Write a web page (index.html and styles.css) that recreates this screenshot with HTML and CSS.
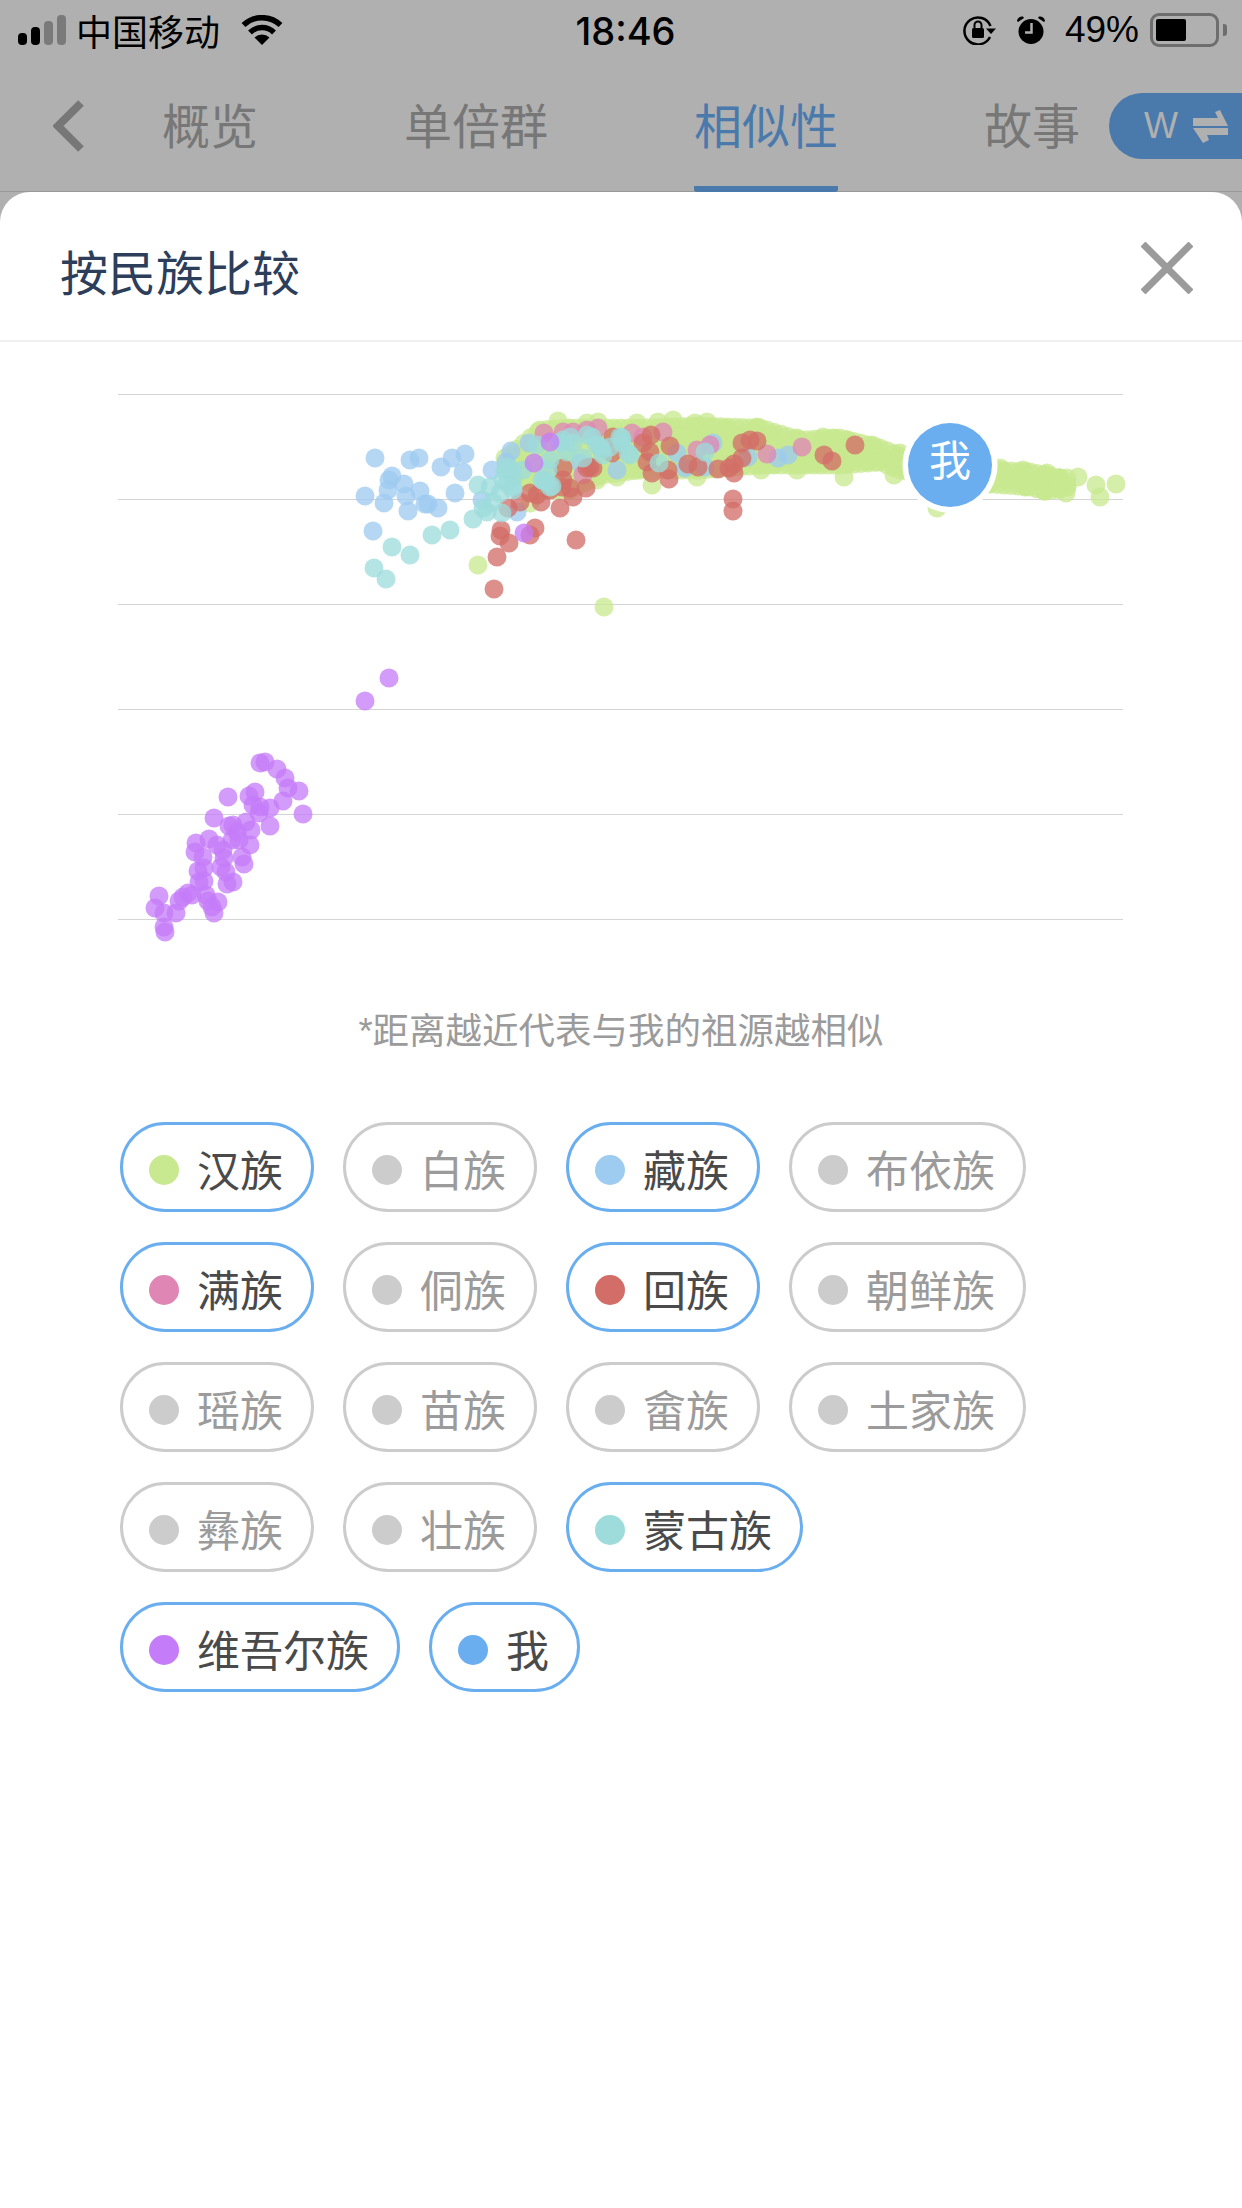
FILE: index.html
```html
<!DOCTYPE html>
<html lang="zh-CN">
<head>
    <meta charset="UTF-8">
    <meta name="viewport" content="width=device-width, initial-scale=1.0">
    <title>按民族比较</title>
    <link rel="stylesheet" href="styles.css">
</head>
<body>
    <div class="top">
        <div class="status">
            <div class="status-left">
                <div class="signal"><span class="bar1"></span><span class="bar2"></span><span class="bar3 off"></span><span class="bar4 off"></span></div>
                <span class="carrier">中国移动</span>
                <svg class="wifi" width="42" height="30" viewBox="0 0 42 30">
                    <path d="M2.5 10 A27 27 0 0 1 39.5 10" fill="none" stroke="#000" stroke-width="5.5"/>
                    <path d="M9 17.5 A17 17 0 0 1 33 17.5" fill="none" stroke="#000" stroke-width="5.5"/>
                    <path d="M21 30 L13.5 22.5 A11 11 0 0 1 28.5 22.5 Z"/>
                </svg>
            </div>
            <div class="time">18:46</div>
            <div class="status-right">
                <svg class="lock" width="33" height="30" viewBox="0 0 33 30">
                    <path d="M27 22 A13.5 13.5 0 1 1 27.5 11" fill="none" stroke="#000" stroke-width="2.5"/>
                    <path d="M23 13.5 L33 13.5 L28 19 Z"/>
                    <rect x="9" y="13" width="12" height="10" rx="1.5"/>
                    <path d="M11.5 13 V10 A3.5 3.5 0 0 1 18.5 10 V13" fill="none" stroke="#000" stroke-width="2"/>
                </svg>
                <svg class="alarm" width="30" height="30" viewBox="0 0 30 30">
                    <circle cx="15" cy="16.5" r="12.5"/>
                    <path d="M1 6 A5 5 0 0 1 7 1.5 L8 3 L2 7 Z M29 6 A5 5 0 0 0 23 1.5 L22 3 L28 7 Z"/>
                    <path d="M15.5 8 V17.5 H9" fill="none" stroke="#b0b0b0" stroke-width="2.5"/>
                </svg>
                <span class="percent">49%</span>
                <div class="battery"><div class="battery-level"></div></div>
                <div class="battery-nub"></div>
            </div>
        </div>
        <div class="nav">
            <svg class="back" width="31" height="52" viewBox="0 0 31 52">
                <path d="M28 3 L5 26 L28 49" fill="none" stroke="#777" stroke-width="8"/>
            </svg>
            <div class="tabs">
                <div class="tab">概览</div>
                <div class="tab">单倍群</div>
                <div class="tab active">相似性</div>
                <div class="tab">故事</div>
            </div>
            <div class="switch">
                <span>W</span>
                <svg width="35" height="33" viewBox="0 0 35 33">
                    <path d="M0 8 H25 L22 2 L27 0 L35 16 H0 Z M35 18 V25 H14 L16 30 L10 33 L0 18 Z" fill="#b0b0b0"/>
                </svg>
            </div>
        </div>
    </div>

    <div class="sheet">
        <div class="sheet-head">
            <div class="sheet-title">按民族比较</div>
            <svg class="close" width="52" height="52" viewBox="0 0 52 52">
                <path d="M2 2 L50 50 M50 2 L2 50" fill="none" stroke="#9b9b9b" stroke-width="7"/>
            </svg>
        </div>

        <svg class="chart" width="1242" height="608" viewBox="0 342 1242 608">
            <g class="grid">
                <line x1="118" x2="1123" y1="394.5" y2="394.5"/>
                <line x1="118" x2="1123" y1="499.5" y2="499.5"/>
                <line x1="118" x2="1123" y1="604.5" y2="604.5"/>
                <line x1="118" x2="1123" y1="709.5" y2="709.5"/>
                <line x1="118" x2="1123" y1="814.5" y2="814.5"/>
                <line x1="118" x2="1123" y1="919.5" y2="919.5"/>
            </g>
            <g id="han" class="pts"></g>
            <g id="zang" class="pts"></g>
            <g id="man" class="pts"></g>
            <g id="hui" class="pts"></g>
            <g id="menggu" class="pts"></g>
            <g id="weiwuer" class="pts"></g>
            <circle cx="950" cy="465" r="47.5" fill="#fff"/>
            <circle cx="950" cy="465" r="42" fill="#6aaef0"/>
            <text class="me" x="950" y="476">我</text>
        </svg>

        <div class="note">*距离越近代表与我的祖源越相似</div>

        <div class="legend">
            <div class="chip on"><i class="dot c-han"></i>汉族</div>
            <div class="chip"><i class="dot"></i>白族</div>
            <div class="chip on"><i class="dot c-zang"></i>藏族</div>
            <div class="chip"><i class="dot"></i>布依族</div>
            <div class="chip on"><i class="dot c-man"></i>满族</div>
            <div class="chip"><i class="dot"></i>侗族</div>
            <div class="chip on"><i class="dot c-hui"></i>回族</div>
            <div class="chip"><i class="dot"></i>朝鲜族</div>
            <div class="chip"><i class="dot"></i>瑶族</div>
            <div class="chip"><i class="dot"></i>苗族</div>
            <div class="chip"><i class="dot"></i>畲族</div>
            <div class="chip"><i class="dot"></i>土家族</div>
            <div class="chip"><i class="dot"></i>彝族</div>
            <div class="chip"><i class="dot"></i>壮族</div>
            <div class="chip on"><i class="dot c-menggu"></i>蒙古族</div>
            <div class="chip on"><i class="dot c-weiwuer"></i>维吾尔族</div>
            <div class="chip on"><i class="dot c-me"></i>我</div>
        </div>
    </div>

    <script src="chart.js"></script>
</body>
</html>
```

FILE: styles.css
```css
* {
    box-sizing: border-box;
}
html, body {
    margin: 0;
    height: 2208px;
    overflow: hidden;
}
body {
    width: 1242px;
    font-family: "Liberation Sans", "Noto Sans CJK SC", sans-serif;
    background-color: #b0b0b0;
}
svg {
    display: block;
    flex: none;
}

/* dimmed page behind the sheet */
.top {
    height: 192px;
    background-color: #b0b0b0;
    border-bottom: 1px solid #999;
}
.status {
    height: 60px;
    padding: 0 15px 0 18px;
    display: grid;
    grid-template-columns: 1fr auto 1fr;
    align-items: center;
    color: #000;
    font-size: 36px;
}
.status-left, .status-right {
    display: flex;
    align-items: center;
}
.status-right {
    justify-content: flex-end;
}
.signal {
    display: flex;
    align-items: flex-end;
    gap: 4px;
    height: 30px;
}
.signal span {
    width: 9px;
    background-color: #000;
    border-radius: 4px;
}
.signal .off {
    background-color: #7a7a7a;
}
.bar1 { height: 12px; }
.bar2 { height: 18px; }
.bar3 { height: 24px; }
.bar4 { height: 30px; }
.carrier {
    margin-left: 10px;
}
.wifi {
    margin-left: 21px;
}
.time {
    margin: 2px 0 0 6px;
    font-family: Inter, sans-serif;
    font-weight: 500;
    font-size: 38px;
}
.alarm {
    margin-left: 20px;
}
.percent {
    margin-left: 19px;
    font-size: 37px;
}
.battery {
    margin-left: 11px;
    width: 69px;
    height: 34px;
    padding: 3px;
    border: 3px solid #6e6e6e;
    border-radius: 9px;
}
.battery-level {
    width: 30px;
    height: 22px;
    background-color: #000;
    border-radius: 2px;
}
.battery-nub {
    margin-left: 4px;
    width: 4px;
    height: 12px;
    background-color: #6e6e6e;
    border-radius: 0 3px 3px 0;
}

.nav {
    height: 131px;
    display: flex;
    align-items: center;
}
.back {
    margin-left: 53px;
}
.tabs {
    height: 100%;
    margin-left: 78px;
    display: flex;
    gap: 146px;
}
.tab {
    height: 132px;
    display: flex;
    align-items: center;
    border-bottom: 6px solid transparent;
    font-size: 48px;
    color: #777;
}
.tab.active {
    color: #4a7aac;
    border-bottom-color: #4a7aac;
    border-radius: 0 0 3px 3px;
}
.switch {
    flex: none;
    width: 133px;
    height: 66px;
    margin: 1px 0 0 auto;
    padding-left: 35px;
    display: flex;
    align-items: center;
    gap: 15px;
    background-color: #4a7aac;
    border-radius: 33px 0 0 33px;
    color: #b0b0b0;
    font-size: 36px;
}

.sheet {
    height: 2016px;
    background-color: #fff;
    border-radius: 30px 30px 0 0;
}
.sheet-head {
    height: 150px;
    padding: 0 49px 0 60px;
    display: flex;
    align-items: center;
    justify-content: space-between;
    border-bottom: 2px solid #f0f0f0;
}
.sheet-title {
    padding-top: 8px;
    font-size: 48px;
    color: #2c3e5a;
}
.close {
    margin-top: 3px;
}

.grid line {
    stroke: #d4d4d4;
    stroke-width: 1;
}
.pts circle {
    fill-opacity: 0.76;
}
#han { fill: #c8e98f; }
#zang { fill: #9ecbf0; }
#man { fill: #e086b5; }
#hui { fill: #d26d67; }
#menggu { fill: #9edcdc; }
#weiwuer { fill: #c57cf8; }
.me {
    fill: #fff;
    font-size: 42px;
    text-anchor: middle;
}

.note {
    margin-top: 57px;
    height: 50px;
    line-height: 50px;
    text-align: center;
    font-size: 36.5px;
    color: #9b9b9b;
}

.legend {
    margin-top: 65px;
    padding: 0 140px 0 120px;
    display: flex;
    flex-wrap: wrap;
    gap: 30px 29px;
}
.chip {
    height: 90px;
    padding: 2px 28px 0 26px;
    display: flex;
    align-items: center;
    gap: 18px;
    border: 3px solid #ccc;
    border-radius: 45px;
    font-size: 43px;
    color: #9b9b9b;
}
.chip.on {
    border-color: #6aaef0;
    color: #4a4a4a;
}
.dot {
    width: 30px;
    height: 30px;
    margin-top: 3px;
    border-radius: 50%;
    background-color: #ccc;
}
.c-han { background-color: #c8e98f; }
.c-zang { background-color: #9ecbf0; }
.c-man { background-color: #e086b5; }
.c-hui { background-color: #d26d67; }
.c-menggu { background-color: #9edcdc; }
.c-weiwuer { background-color: #c57cf8; }
.c-me { background-color: #6aaef0; }
```

FILE: chart.js
```js
// scatter points, in page pixels
const points = {
    han: [[478,565],[604,607],[558,421],[652,485],[697,477],[637,423],[617,477],[530,503],[597,480],[761,470],[797,470],[844,477],[894,475],[937,508],[1078,477],[1096,485],[1116,484],[1100,497],[1066,493],
        [1000,468],[1010,480],[1023,470],[1025,487],[1047,473],[1047,487],[1060,478],[1057,488],[823,437],[833,438],[847,440],[872,445],[900,453],[797,438],[772,435],[757,427],[598,422],[587,423],[673,420],[658,422],[695,423],[707,422],[725,428],[505,458]],
    zang: [[375,458],[410,460],[419,458],[441,467],[452,458],[465,454],[463,472],[392,476],[389,480],[388,490],[404,484],[365,496],[384,503],[406,496],[420,491],[425,504],[428,504],[438,508],[408,511],[455,493],[373,531],[492,470],[511,451],[482,500],[517,512],[506,462],[529,443],[617,470],[677,453],[685,468],[713,443],[580,463],[778,458],[788,455],[748,457],[705,467]],
    man: [[544,433],[563,432],[573,432],[587,430],[598,428],[632,433],[643,437],[663,432],[697,450],[710,445],[583,475],[767,454],[802,447]],
    hui: [[501,530],[500,536],[509,543],[535,528],[530,535],[576,540],[497,557],[494,589],[560,508],[573,497],[586,488],[530,493],[541,502],[537,495],[520,502],[508,508],[562,487],[550,490],[570,488],[563,468],[587,468],[593,468],[612,453],[613,437],[643,443],[651,435],[650,452],[670,446],[647,462],[652,473],[668,470],[669,479],[688,464],[698,467],[718,469],[729,468],[733,499],[733,511],[855,445],[824,455],[832,461],[750,440],[757,441],[742,443],[742,458],[734,464],[734,473],[563,480],[590,467]],
    menggu: [[392,547],[410,555],[432,535],[450,530],[374,568],[386,579],[473,519],[478,485],[490,487],[487,512],[502,513],[483,508],[493,502],[500,493],[505,470],[513,477],[507,483],[513,490],[523,470],[537,445],[550,460],[548,470],[542,480],[547,482],[552,486],[563,440],[570,437],[567,452],[583,458],[587,435],[597,445],[602,450],[622,443],[630,455],[659,463],[705,452],[560,443],[573,443],[610,447],[620,437],[512,470],[503,480],[543,480],[513,487],[507,467],[600,447],[622,438],[628,453],[592,437],[603,455],[550,487]],
    weiwuer: [[550,442],[534,463],[524,533],[389,678],[365,701],[260,763],[265,762],[277,769],[285,778],[288,788],[299,791],[283,801],[303,814],[270,826],[228,797],[255,792],[249,796],[253,805],[260,807],[259,813],[270,808],[214,818],[229,826],[233,825],[246,822],[251,830],[237,832],[232,840],[239,840],[250,845],[196,843],[209,839],[217,845],[195,852],[203,857],[223,850],[224,858],[242,857],[244,864],[221,867],[226,872],[198,871],[204,868],[199,882],[204,881],[227,884],[233,882],[206,895],[188,893],[183,897],[179,901],[159,896],[155,908],[164,913],[176,913],[208,901],[218,902],[212,907],[214,913],[164,927],[165,932],[192,895]]
};

// the dense han band: x, top edge, bottom edge
const band = [[510,455,470],[540,430,490],[570,428,490],[600,428,475],[640,428,470],[700,426,470],[760,428,465],[800,440,465],[840,438,465],[880,448,462],[900,456,470],[960,470,480],[990,470,484],[1030,472,487],[1045,475,491],[1060,478,489],[1072,478,486]];

for (let i = 0; i < band.length - 1; i++) {
    const [x0, top0, bottom0] = band[i];
    const [x1, top1, bottom1] = band[i + 1];
    for (let x = x0; x < x1; x += 7) {
        const t = (x - x0) / (x1 - x0);
        const top = top0 + (top1 - top0) * t;
        const bottom = bottom0 + (bottom1 - bottom0) * t;
        for (let y = top; y <= bottom; y += 8) {
            points.han.push([x, y]);
        }
        points.han.push([x, bottom]);
    }
}

for (const name in points) {
    const group = document.getElementById(name);
    points[name].forEach(function (p) {
        const dot = document.createElementNS('http://www.w3.org/2000/svg', 'circle');
        dot.setAttribute('cx', p[0]);
        dot.setAttribute('cy', p[1]);
        dot.setAttribute('r', 9.5);
        group.appendChild(dot);
    });
}
```
